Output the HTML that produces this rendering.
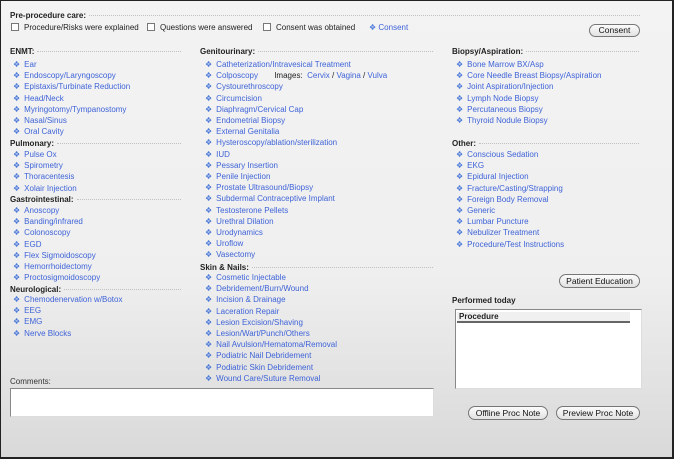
<!DOCTYPE html>
<html><head><meta charset="utf-8"><style>
*{margin:0;padding:0;box-sizing:border-box}
body{width:674px;height:459px;overflow:hidden;font-family:"Liberation Sans",sans-serif;font-size:8px;color:#222;background:#fff}
#f{position:absolute;left:0;top:0;width:674px;height:459px;border:1px solid #222;border-right:2px solid #222;border-bottom:2px solid #222;background:linear-gradient(#f3f3f3 0%,#efefef 60%,#d9d9d9 100%)}
.a{position:absolute;white-space:nowrap}
.h{position:absolute;font-weight:bold;display:flex;align-items:center;white-space:nowrap;height:11px}
.h i{flex:1;border-top:1px dotted #c0c0c0;margin-left:3px;height:0}
.col{position:absolute;line-height:11.2px}
.col div{white-space:nowrap;color:#3e63d8}
.col div b{color:#4a78d8;font-weight:normal;margin-right:4px;font-size:8px}
.btn{position:absolute;border:1px solid #777;border-radius:7px;background:linear-gradient(#fbfbfb,#e2e2e2);text-align:center;font-size:8.5px;line-height:11px;color:#111}
.cb{display:inline-block;width:8px;height:8px;border:1px solid #777;background:#fff;vertical-align:-1px;margin-right:5px}
</style></head><body><div id="f">
<div class="h" style="left:9px;top:9px;width:630px">Pre-procedure care:<i></i></div>
<div class="a" style="left:10px;top:22px"><span class="cb"></span>Procedure/Risks were explained</div>
<div class="a" style="left:146px;top:22px"><span class="cb"></span>Questions were answered</div>
<div class="a" style="left:262px;top:22px"><span class="cb"></span>Consent was obtained</div>
<div class="a" style="left:368px;top:22px;color:#3e63d8"><span style="color:#4a78d8">❖</span> Consent</div>
<div class="btn" style="left:588px;top:23px;width:51px;height:13px">Consent</div>

<div class="h" style="left:9px;top:45px;width:171px">ENMT:<i></i></div>
<div class="col" style="left:12px;top:58px">
<div><b>❖</b>Ear</div><div><b>❖</b>Endoscopy/Laryngoscopy</div><div><b>❖</b>Epistaxis/Turbinate Reduction</div><div><b>❖</b>Head/Neck</div><div><b>❖</b>Myringotomy/Tympanostomy</div><div><b>❖</b>Nasal/Sinus</div><div><b>❖</b>Oral Cavity</div></div>
<div class="h" style="left:9px;top:137px;width:171px">Pulmonary:<i></i></div>
<div class="col" style="left:12px;top:148px">
<div><b>❖</b>Pulse Ox</div><div><b>❖</b>Spirometry</div><div><b>❖</b>Thoracentesis</div><div><b>❖</b>Xolair Injection</div></div>
<div class="h" style="left:9px;top:193px;width:171px">Gastrointestinal:<i></i></div>
<div class="col" style="left:12px;top:204px">
<div><b>❖</b>Anoscopy</div><div><b>❖</b>Banding/infrared</div><div><b>❖</b>Colonoscopy</div><div><b>❖</b>EGD</div><div><b>❖</b>Flex Sigmoidoscopy</div><div><b>❖</b>Hemorrhoidectomy</div><div><b>❖</b>Proctosigmoidoscopy</div></div>
<div class="h" style="left:9px;top:283px;width:171px">Neurological:<i></i></div>
<div class="col" style="left:12px;top:293px">
<div><b>❖</b>Chemodenervation w/Botox</div><div><b>❖</b>EEG</div><div><b>❖</b>EMG</div><div><b>❖</b>Nerve Blocks</div></div>

<div class="h" style="left:199px;top:45px;width:233px">Genitourinary:<i></i></div>
<div class="col" style="left:204px;top:58px">
<div><b>❖</b>Catheterization/Intravesical Treatment</div>
<div><b>❖</b>Colposcopy <span style="color:#222;margin-left:14px">Images:</span>&nbsp; Cervix <span style="color:#222">/</span> Vagina <span style="color:#222">/</span> Vulva</div>
<div><b>❖</b>Cystourethroscopy</div><div><b>❖</b>Circumcision</div><div><b>❖</b>Diaphragm/Cervical Cap</div><div><b>❖</b>Endometrial Biopsy</div><div><b>❖</b>External Genitalia</div><div><b>❖</b>Hysteroscopy/ablation/sterilization</div><div><b>❖</b>IUD</div><div><b>❖</b>Pessary Insertion</div><div><b>❖</b>Penile Injection</div><div><b>❖</b>Prostate Ultrasound/Biopsy</div><div><b>❖</b>Subdermal Contraceptive Implant</div><div><b>❖</b>Testosterone Pellets</div><div><b>❖</b>Urethral Dilation</div><div><b>❖</b>Urodynamics</div><div><b>❖</b>Uroflow</div><div><b>❖</b>Vasectomy</div></div>
<div class="h" style="left:199px;top:261px;width:233px">Skin &amp; Nails:<i></i></div>
<div class="col" style="left:204px;top:271px">
<div><b>❖</b>Cosmetic Injectable</div><div><b>❖</b>Debridement/Burn/Wound</div><div><b>❖</b>Incision &amp; Drainage</div><div><b>❖</b>Laceration Repair</div><div><b>❖</b>Lesion Excision/Shaving</div><div><b>❖</b>Lesion/Wart/Punch/Others</div><div><b>❖</b>Nail Avulsion/Hematoma/Removal</div><div><b>❖</b>Podiatric Nail Debridement</div><div><b>❖</b>Podiatric Skin Debridement</div><div><b>❖</b>Wound Care/Suture Removal</div></div>

<div class="h" style="left:451px;top:45px;width:187px">Biopsy/Aspiration:<i></i></div>
<div class="col" style="left:455px;top:58px">
<div><b>❖</b>Bone Marrow BX/Asp</div><div><b>❖</b>Core Needle Breast Biopsy/Aspiration</div><div><b>❖</b>Joint Aspiration/Injection</div><div><b>❖</b>Lymph Node Biopsy</div><div><b>❖</b>Percutaneous Biopsy</div><div><b>❖</b>Thyroid Nodule Biopsy</div></div>
<div class="h" style="left:451px;top:137px;width:187px">Other:<i></i></div>
<div class="col" style="left:455px;top:148px">
<div><b>❖</b>Conscious Sedation</div><div><b>❖</b>EKG</div><div><b>❖</b>Epidural Injection</div><div><b>❖</b>Fracture/Casting/Strapping</div><div><b>❖</b>Foreign Body Removal</div><div><b>❖</b>Generic</div><div><b>❖</b>Lumbar Puncture</div><div><b>❖</b>Nebulizer Treatment</div><div><b>❖</b>Procedure/Test Instructions</div></div>

<div class="btn" style="left:558px;top:273px;width:81px;height:14px;line-height:12px">Patient Education</div>
<div class="a" style="left:451px;top:295px;font-weight:bold">Performed today</div>
<div class="a" style="left:454px;top:308px;width:187px;height:80px;background:#fff;border:1px solid #888;border-right-color:#ddd;border-bottom-color:#ddd">
<div style="margin:2px 11px 0 1px;background:#f0f0f0;border-bottom:2px solid #666;padding-left:2px;font-weight:bold;line-height:9px;height:11px">Procedure</div></div>
<div class="a" style="left:9px;top:376px;color:#333">Comments:</div>
<div class="a" style="left:9px;top:387px;width:424px;height:29px;background:#fff;border:1px solid #888;border-right-color:#ddd;border-bottom-color:#ddd"></div>
<div class="btn" style="left:467px;top:405px;width:80px;height:14px;line-height:12px">Offline Proc Note</div>
<div class="btn" style="left:555px;top:405px;width:84px;height:14px;line-height:12px">Preview Proc Note</div>
</div></body></html>
